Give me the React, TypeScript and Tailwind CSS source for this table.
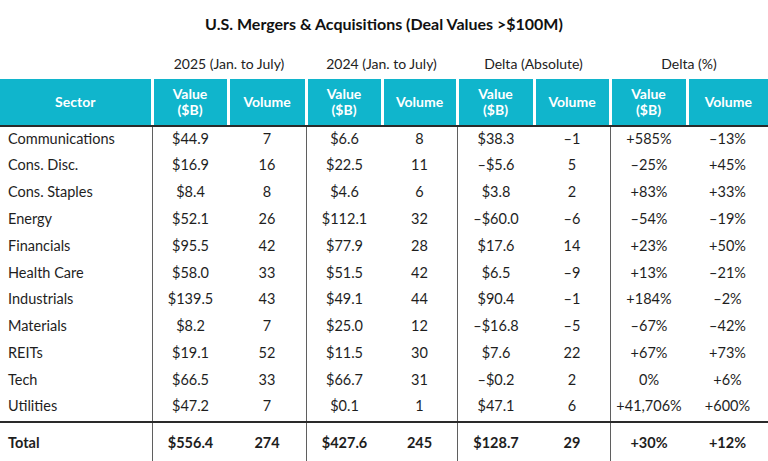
import React from "react";

const rows: string[][] = [
  ["Communications", "$44.9", "7", "$6.6", "8", "$38.3", "–1", "+585%", "–13%"],
  ["Cons. Disc.", "$16.9", "16", "$22.5", "11", "–$5.6", "5", "–25%", "+45%"],
  ["Cons. Staples", "$8.4", "8", "$4.6", "6", "$3.8", "2", "+83%", "+33%"],
  ["Energy", "$52.1", "26", "$112.1", "32", "–$60.0", "–6", "–54%", "–19%"],
  ["Financials", "$95.5", "42", "$77.9", "28", "$17.6", "14", "+23%", "+50%"],
  ["Health Care", "$58.0", "33", "$51.5", "42", "$6.5", "–9", "+13%", "–21%"],
  ["Industrials", "$139.5", "43", "$49.1", "44", "$90.4", "–1", "+184%", "–2%"],
  ["Materials", "$8.2", "7", "$25.0", "12", "–$16.8", "–5", "–67%", "–42%"],
  ["REITs", "$19.1", "52", "$11.5", "30", "$7.6", "22", "+67%", "+73%"],
  ["Tech", "$66.5", "33", "$66.7", "31", "–$0.2", "2", "0%", "+6%"],
  ["Utilities", "$47.2", "7", "$0.1", "1", "$47.1", "6", "+41,706%", "+600%"],
];

const total = ["Total", "$556.4", "274", "$427.6", "245", "$128.7", "29", "+30%", "+12%"];

const grid = "grid grid-cols-[152px_76px_78px_76px_75px_77px_76px_77px_81px]";

function Cell({ i, text, bold }: { i: number; text: string; bold?: boolean }) {
  const line = i === 1 || i === 3 || i === 5 || i === 7;
  return (
    <div
      className={
        "flex items-center h-full " +
        (i === 0 ? "justify-start pl-[8px] " : "justify-center ") +
        (line ? "border-l border-[#5f5f5f] " : "") +
        (bold ? "font-bold pt-[1px]" : "pb-[3px]")
      }
    >
      {text}
    </div>
  );
}

export default function App() {
  const heads = ["Sector", "Value\n($B)", "Volume", "Value\n($B)", "Volume", "Value\n($B)", "Volume", "Value\n($B)", "Volume"];
  return (
    <div
      className="w-[768px] h-[461px] bg-white overflow-hidden text-[#1e1e1e]"
      style={{ fontFamily: "Lato, 'Noto Sans', sans-serif" }}
    >
      <div className="h-[48px] flex items-center justify-center text-[16px] font-bold text-[#111]">
        U.S. Mergers &amp; Acquisitions (Deal Values &gt;$100M)
      </div>
      <div className={grid + " h-[31px] text-[14px] text-[#222]"}>
        <div />
        <div className="col-span-2 flex items-center justify-center">2025 (Jan. to July)</div>
        <div className="col-span-2 flex items-center justify-center">2024 (Jan. to July)</div>
        <div className="col-span-2 flex items-center justify-center">Delta (Absolute)</div>
        <div className="col-span-2 flex items-center justify-center">Delta (%)</div>
      </div>
      <div className={grid + " h-[46px]"}>
        {heads.map((h, i) => (
          <div key={i} className={(i === 0 ? "pr-[1.5px]" : i === 8 ? "pl-[1.5px]" : "px-[1.5px]") + " h-full"}>
            <div className="h-full bg-[#10b5cc] text-white font-bold text-[14px] leading-[16px] flex items-center justify-center text-center whitespace-pre-line">
              {h}
            </div>
          </div>
        ))}
      </div>
      <div className="h-[1.5px] bg-[#2a2a2a]" />
      {rows.map((r, ri) => (
        <div key={ri} className={grid + " h-[26.8px] text-[14.5px]"}>
          {r.map((c, i) => (
            <Cell key={i} i={i} text={c} />
          ))}
        </div>
      ))}
      <div className="h-[1.5px] bg-[#2a2a2a]" />
      <div className={grid + " h-[40px] text-[14.5px]"}>
        {total.map((c, i) => (
          <Cell key={i} i={i} text={c} bold />
        ))}
      </div>
    </div>
  );
}
